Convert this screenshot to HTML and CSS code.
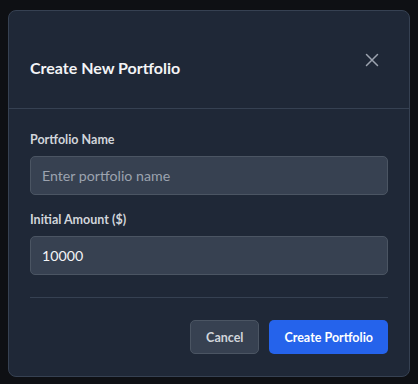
FILE: index.html
```html
<!DOCTYPE html>
<html lang="en">
<head>
  <meta charset="UTF-8">
  <title>Create New Portfolio</title>
  <link rel="stylesheet" href="styles.css">
</head>
<body>
  <div class="overlay">
    <div class="modal">
      <div class="modal-header">
        <h2>Create New Portfolio</h2>
        <button class="close" aria-label="Close">
          <svg width="14" height="14" viewBox="0 0 14 14" fill="none" stroke="currentColor" stroke-width="1.5" stroke-linecap="round">
            <path d="M1.5 1.5L12.5 12.5M12.5 1.5L1.5 12.5"/>
          </svg>
        </button>
      </div>
      <div class="modal-body">
        <div class="form-group">
          <label for="name">Portfolio Name</label>
          <input id="name" type="text" placeholder="Enter portfolio name">
        </div>
        <div class="form-group">
          <label for="amount">Initial Amount ($)</label>
          <input id="amount" type="text" value="10000">
        </div>
        <div class="actions">
          <button class="btn btn-secondary">Cancel</button>
          <button class="btn btn-primary">Create Portfolio</button>
        </div>
      </div>
    </div>
  </div>
</body>
</html>
```

FILE: styles.css
```css
:root {
  --bg: #0e1014;
  --panel: #1f2837;
  --border: #364152;
  --input: #374151;
  --input-border: #4b5563;
  --text: #f3f4f6;
  --muted: #d1d5db;
  --placeholder: #9ca3af;
  --primary: #2563eb;
}

* {
  margin: 0;
  padding: 0;
  box-sizing: border-box;
}

body {
  font-family: Lato, "Noto Sans", Arial, sans-serif;
  background-color: var(--bg);
  color: var(--text);
  width: 418px;
  height: 384px;
  overflow: hidden;
}

.overlay {
  padding: 10px 8px 0 8px;
}

.modal {
  width: 402px;
  height: 367px;
  background-color: var(--panel);
  border: 1px solid var(--border);
  border-radius: 8px;
  display: flex;
  flex-direction: column;
}

.modal-header {
  display: flex;
  justify-content: space-between;
  align-items: flex-start;
  padding: 37px 25px 0 21px;
  height: 98px;
  border-bottom: 1px solid var(--border);
}

.modal-header h2 {
  font-size: 16px;
  font-weight: 700;
  line-height: 24px;
  margin-top: 8px;
}

.close {
  background: none;
  border: none;
  color: #9ca3af;
  width: 24px;
  height: 24px;
  display: flex;
  align-items: center;
  justify-content: center;
  cursor: pointer;
}

.modal-body {
  padding: 22px 21px 0 21px;
  display: flex;
  flex-direction: column;
}

.form-group {
  display: flex;
  flex-direction: column;
  gap: 8px;
  margin-bottom: 16px;
}

label {
  font-size: 12.5px;
  font-weight: 700;
  color: var(--muted);
  line-height: 17px;
}

input {
  height: 39px;
  padding: 0 11px;
  font-family: inherit;
  font-size: 14.2px;
  color: var(--text);
  background-color: var(--input);
  border: 1px solid var(--input-border);
  border-radius: 5px;
  outline: none;
}

input::placeholder {
  color: var(--placeholder);
}

.actions {
  display: flex;
  justify-content: flex-end;
  gap: 10px;
  margin-top: 6px;
  padding-top: 22px;
  border-top: 1px solid var(--border);
}

.btn {
  height: 34px;
  padding: 0 15px;
  font-family: inherit;
  font-size: 12.5px;
  font-weight: 700;
  border-radius: 5px;
  cursor: pointer;
}

.btn-secondary {
  background-color: var(--input);
  color: var(--muted);
  border: 1px solid var(--input-border);
}

.btn-primary {
  background-color: var(--primary);
  color: #fff;
  border: none;
}
```
